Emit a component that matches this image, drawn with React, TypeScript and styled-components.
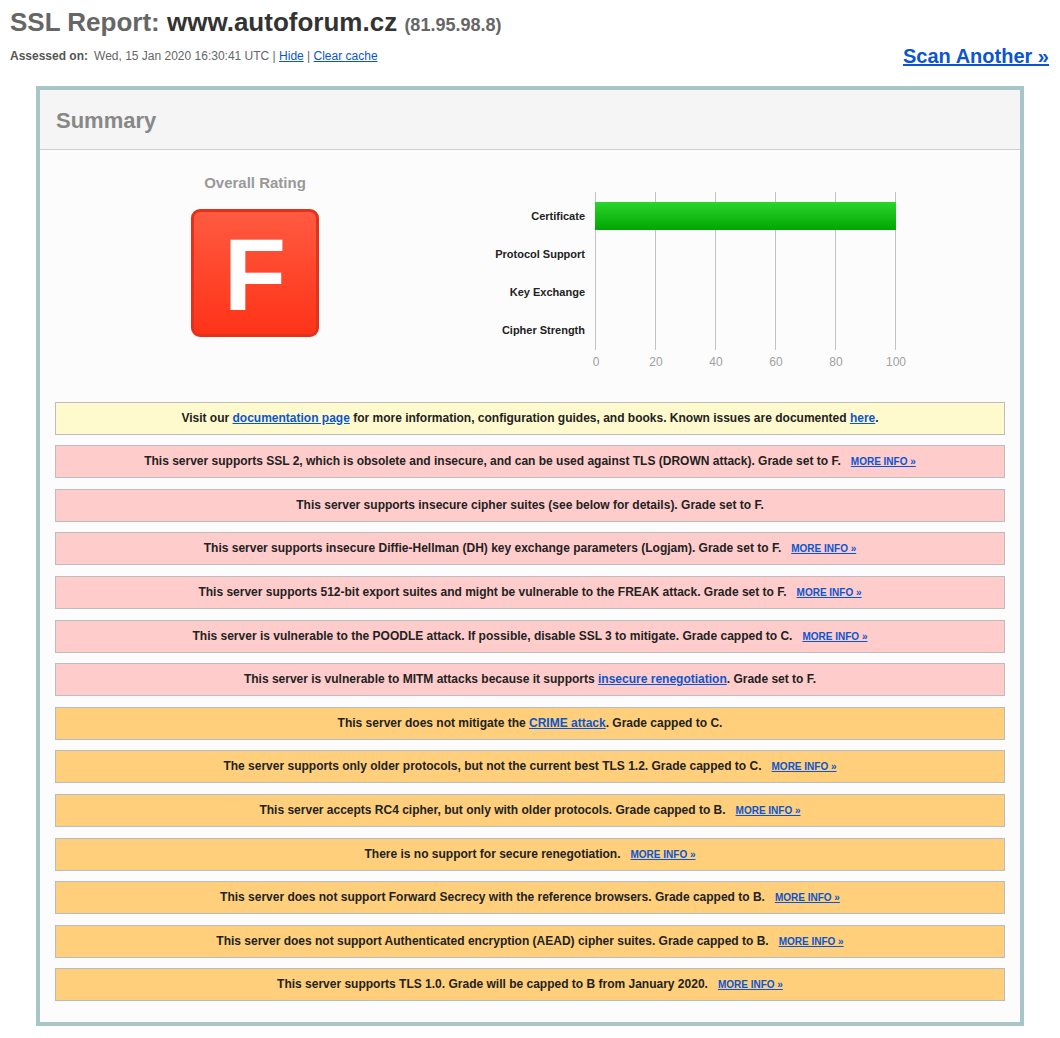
import React from "react";
import styled, { createGlobalStyle } from "styled-components";

type Level = "info" | "error" | "warning";

interface Notice {
  level: Level;
  text: React.ReactNode;
  more?: boolean;
}

const GlobalStyle = createGlobalStyle`
  body {
    margin: 0;
    background: #fff;
    font-family: "Liberation Sans", Arial, sans-serif;
    color: #222;
  }
`;

const noticeBg: Record<Level, string> = {
  info: "#fffacd",
  error: "#ffcccc",
  warning: "#ffcf7b",
};

const noticeBorder: Record<Level, string> = {
  info: "#bdbdbd",
  error: "#bdbdbd",
  warning: "#b5bcc6",
};

const chartRows = [
  { label: "Certificate", value: 100 },
  { label: "Protocol Support", value: 0 },
  { label: "Key Exchange", value: 0 },
  { label: "Cipher Strength", value: 0 },
];

const TopBar = styled.div`
  display: flex;
  justify-content: space-between;
  align-items: flex-end;
  padding: 0 11px 0 10px;
`;

const TitleBlock = styled.div`
  display: flex;
  flex-direction: column;
`;

const Title = styled.h1`
  margin: 7px 0 0;
  font-size: 26px;
  line-height: 30px;
  font-weight: bold;
  color: #666;
`;

const Host = styled.span`
  color: #333;
`;

const Ip = styled.span`
  font-size: 18px;
  color: #666;
`;

const Assessed = styled.div`
  margin-top: 8px;
  font-size: 12px;
  line-height: 16px;
  color: #666;
  display: flex;
  gap: 6px;

  strong {
    color: #555;
  }
`;

const SmallLink = styled.a`
  color: #0b55d0;
  text-decoration: underline;
`;

const ScanLink = styled.a`
  font-size: 20px;
  line-height: 24px;
  font-weight: bold;
  color: #0b55d0;
  text-decoration: underline;
  margin-bottom: -4px;
`;

const ReportBox = styled.div`
  box-sizing: border-box;
  width: 988px;
  margin: 22px 0 0 36px;
  border: 4px solid #a8c5c8;
  background: #fcfcfc;
`;

const BoxHeader = styled.div`
  height: 56px;
  display: flex;
  align-items: center;
  padding: 3px 0 0 16px;
  background: #f5f5f5;
  border-bottom: 1px solid #c8d0d6;
  font-size: 22px;
  font-weight: bold;
  color: #888;
`;

const BoxBody = styled.div`
  padding: 0 15px 21px;
`;

const RatingRow = styled.div`
  display: flex;
  height: 241px;
`;

const GradeColumn = styled.div`
  width: 400px;
  display: flex;
  flex-direction: column;
  align-items: center;
  padding-top: 24px;
`;

const GradeLabel = styled.div`
  font-size: 15px;
  line-height: 18px;
  font-weight: bold;
  color: #999;
`;

const GradeBadge = styled.div`
  box-sizing: border-box;
  margin-top: 17px;
  width: 128px;
  height: 128px;
  border-radius: 9px;
  border: 3px solid #e2321c;
  background: linear-gradient(#ff5a40, #ff3318);
  color: #fff;
  font-size: 102px;
  font-weight: bold;
  display: flex;
  align-items: center;
  justify-content: center;
  line-height: 1;
  padding-top: 4px;
`;

const ChartSvg = styled.svg`
  display: block;
  margin-top: 35px;
`;

const NoticeBox = styled.div<{ $level: Level }>`
  margin-top: 10.6px;
  padding: 8px 10px;
  border: 1px solid ${({ $level }) => noticeBorder[$level]};
  background: ${({ $level }) => noticeBg[$level]};
  text-align: center;
  font-size: 12px;
  line-height: 15px;
  font-weight: bold;
  color: #222;
`;

const Link = styled.a`
  color: #0b55d0;
  text-decoration: underline;
`;

const MoreInfo = styled.a`
  margin-left: 10px;
  font-size: 10px;
  font-weight: bold;
  color: #0b55d0;
  text-decoration: underline;
`;

const notices: Notice[] = [
  {
    level: "info",
    text: (
      <>
        Visit our <Link href="#">documentation page</Link> for more information,
        configuration guides, and books. Known issues are documented{" "}
        <Link href="#">here</Link>.
      </>
    ),
  },
  {
    level: "error",
    text: "This server supports SSL 2, which is obsolete and insecure, and can be used against TLS (DROWN attack). Grade set to F.",
    more: true,
  },
  {
    level: "error",
    text: "This server supports insecure cipher suites (see below for details). Grade set to F.",
  },
  {
    level: "error",
    text: "This server supports insecure Diffie-Hellman (DH) key exchange parameters (Logjam). Grade set to F.",
    more: true,
  },
  {
    level: "error",
    text: "This server supports 512-bit export suites and might be vulnerable to the FREAK attack. Grade set to F.",
    more: true,
  },
  {
    level: "error",
    text: "This server is vulnerable to the POODLE attack. If possible, disable SSL 3 to mitigate. Grade capped to C.",
    more: true,
  },
  {
    level: "error",
    text: (
      <>
        This server is vulnerable to MITM attacks because it supports{" "}
        <Link href="#">insecure renegotiation</Link>. Grade set to F.
      </>
    ),
  },
  {
    level: "warning",
    text: (
      <>
        This server does not mitigate the <Link href="#">CRIME attack</Link>.
        Grade capped to C.
      </>
    ),
  },
  {
    level: "warning",
    text: "The server supports only older protocols, but not the current best TLS 1.2. Grade capped to C.",
    more: true,
  },
  {
    level: "warning",
    text: "This server accepts RC4 cipher, but only with older protocols. Grade capped to B.",
    more: true,
  },
  {
    level: "warning",
    text: "There is no support for secure renegotiation.",
    more: true,
  },
  {
    level: "warning",
    text: "This server does not support Forward Secrecy with the reference browsers. Grade capped to B.",
    more: true,
  },
  {
    level: "warning",
    text: "This server does not support Authenticated encryption (AEAD) cipher suites. Grade capped to B.",
    more: true,
  },
  {
    level: "warning",
    text: "This server supports TLS 1.0. Grade will be capped to B from January 2020.",
    more: true,
  },
];

const RatingChart = () => {
  const x0 = 140;
  const scale = 3;
  const ticks = [0, 20, 40, 60, 80, 100];
  return (
    <ChartSvg width={470} height={190} viewBox="0 0 470 190">
      <defs>
        <linearGradient id="barGreen" x1="0" y1="0" x2="0" y2="1">
          <stop offset="0" stopColor="#2bd52b" />
          <stop offset="1" stopColor="#00a600" />
        </linearGradient>
      </defs>
      {ticks.map((t) => (
        <g key={t}>
          <line
            x1={x0 + t * scale + 0.5}
            x2={x0 + t * scale + 0.5}
            y1={7}
            y2={165}
            stroke="#c2c2c2"
            strokeWidth={1}
          />
          <text
            x={x0 + t * scale + 1}
            y={181}
            textAnchor="middle"
            fontSize={12}
            fill="#a0a0a0"
            fontFamily="Liberation Sans, Arial, sans-serif"
          >
            {t}
          </text>
        </g>
      ))}
      {chartRows.map((r, i) => (
        <g key={r.label}>
          {r.value > 0 && (
            <rect
              x={x0}
              y={17 + i * 38}
              width={r.value * scale + 1}
              height={28}
              fill="url(#barGreen)"
            />
          )}
          <text
            x={130}
            y={35 + i * 38}
            textAnchor="end"
            fontSize={11}
            fontWeight="bold"
            fill="#222"
            fontFamily="Liberation Sans, Arial, sans-serif"
          >
            {r.label}
          </text>
        </g>
      ))}
    </ChartSvg>
  );
};

const App = () => {
  return (
    <>
      <GlobalStyle />
      <TopBar>
        <TitleBlock>
          <Title>
            SSL Report: <Host>www.autoforum.cz</Host> <Ip>(81.95.98.8)</Ip>
          </Title>
          <Assessed>
            <strong>Assessed on:</strong>
            <span>
              Wed, 15 Jan 2020 16:30:41 UTC | <SmallLink href="#">Hide</SmallLink>{" "}
              | <SmallLink href="#">Clear cache</SmallLink>
            </span>
          </Assessed>
        </TitleBlock>
        <ScanLink href="#">Scan Another »</ScanLink>
      </TopBar>

      <ReportBox>
        <BoxHeader>Summary</BoxHeader>
        <BoxBody>
          <RatingRow>
            <GradeColumn>
              <GradeLabel>Overall Rating</GradeLabel>
              <GradeBadge>F</GradeBadge>
            </GradeColumn>
            <RatingChart />
          </RatingRow>
          {notices.map((n, i) => (
            <NoticeBox key={i} $level={n.level}>
              {n.text}
              {n.more && <MoreInfo href="#">MORE INFO »</MoreInfo>}
            </NoticeBox>
          ))}
        </BoxBody>
      </ReportBox>
    </>
  );
};

export default App;
